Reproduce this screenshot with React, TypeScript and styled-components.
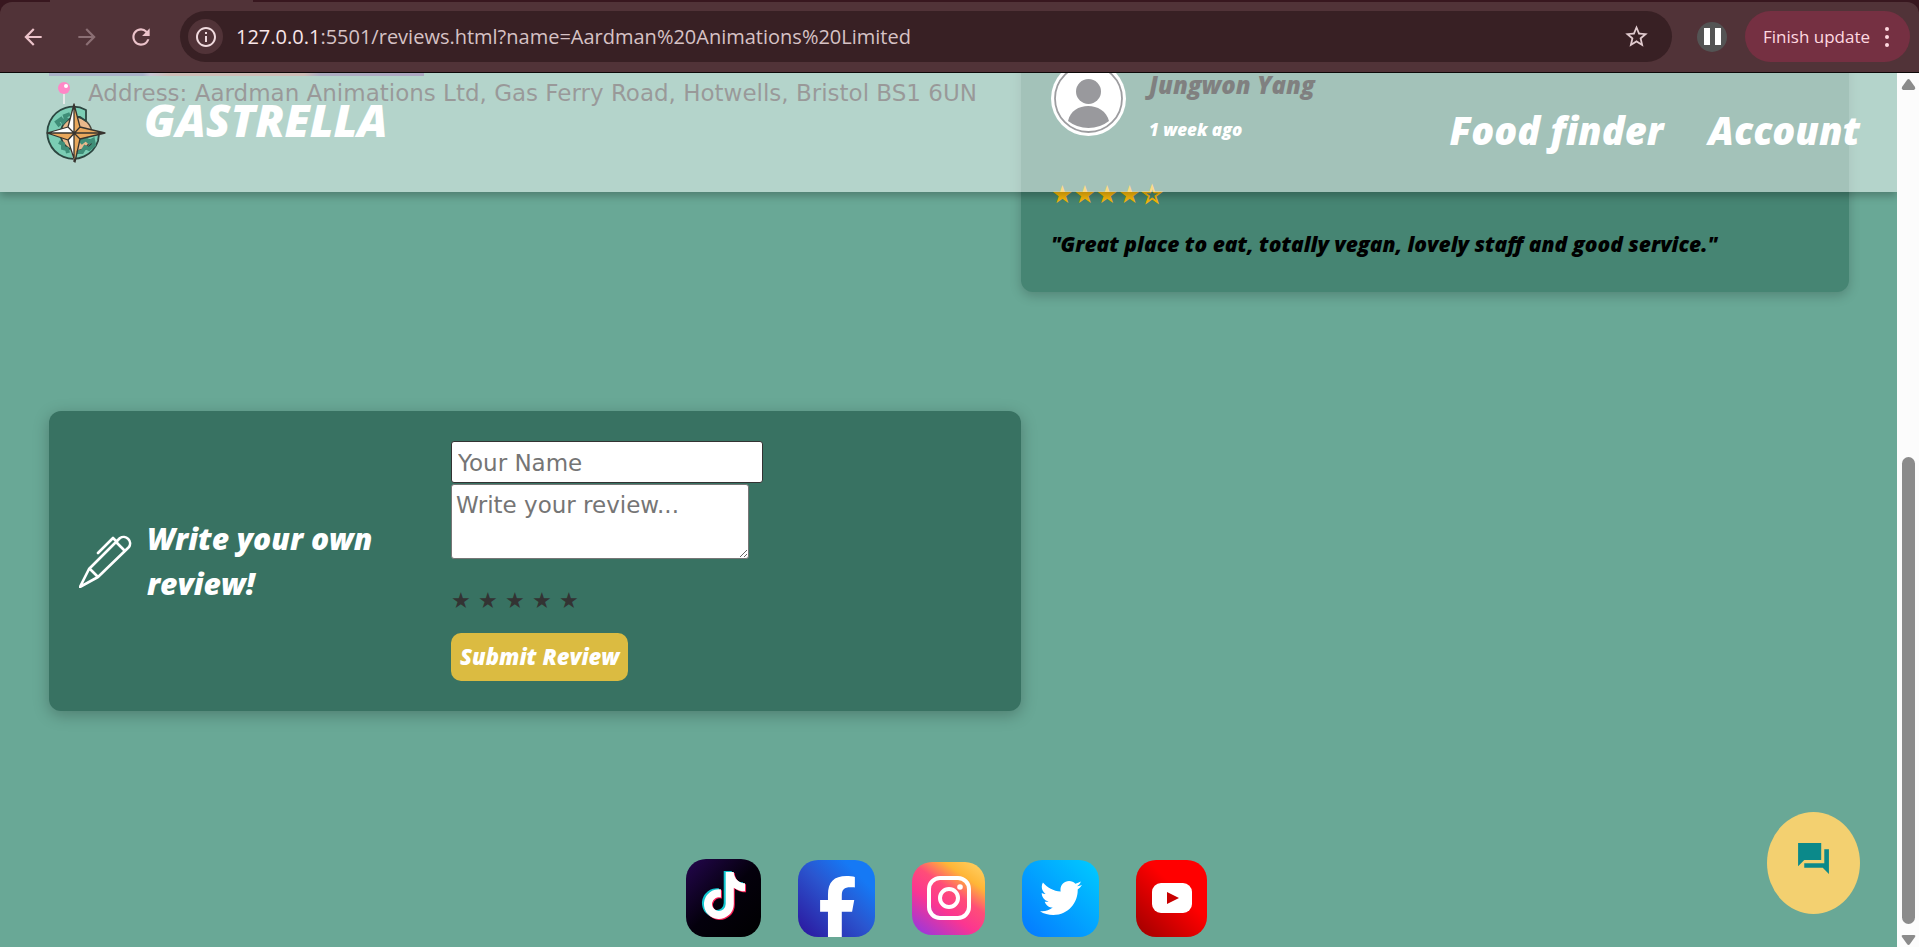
import React from "react";
import styled, { createGlobalStyle } from "styled-components";
import { FaFacebookF, FaTiktok, FaTwitter } from "react-icons/fa6";
import { MdArrowBack, MdArrowForward, MdInfoOutline, MdRefresh, MdStarBorder } from "react-icons/md";

const display = `"Open Sans", "Lato", sans-serif`;
const body = `"DejaVu Sans", Verdana, sans-serif`;
const chrome = `"Open Sans", "Noto Sans", sans-serif`;

const GlobalStyle = createGlobalStyle`
  *, *::before, *::after { box-sizing: border-box; }
  body { margin: 0; background: #69a896; font-family: ${body}; }
  button, input, textarea { font: inherit; }
  p, h1, h2, h3, form, fieldset { margin: 0; }
`;

const Shell = styled.div`
  display: flex;
  flex-direction: column;
  min-height: 100vh;
`;

/* Browser bar */
const TabStrip = styled.div`
  height: 2px;
  padding-left: 50px;
  background: #38171f;
`;
const ActiveTab = styled.div`
  width: 203px;
  height: 2px;
  background: #513338;
`;
const TabBacking = styled.div`
  background: #38171f;
`;
const Toolbar = styled.div`
  display: flex;
  align-items: center;
  height: 71px;
  padding: 0 9px 1px 20px;
  background: #513338;
  border-radius: 12px 12px 0 0;
  border-bottom: 1px solid #0c0808;
  font-family: ${chrome};
`;
const NavButtons = styled.div`
  display: flex;
  gap: 28px;
  width: 160px;
`;
const IconButton = styled.button<{ $color?: string }>`
  display: flex;
  padding: 0;
  border: 0;
  background: none;
  color: ${(p) => p.$color ?? "#ecc3ca"};
`;
const AddressBar = styled.div`
  display: flex;
  flex: 1;
  align-items: center;
  gap: 13px;
  height: 51px;
  padding: 0 22px 0 8px;
  border-radius: 26px;
  background: #382024;
`;
const InfoBadge = styled.span`
  display: flex;
  align-items: center;
  justify-content: center;
  width: 35px;
  height: 35px;
  border-radius: 50%;
  background: #513338;
  color: #f0dade;
`;
const Url = styled.span`
  flex: 1;
  color: #d6c2c5;
  font-size: 20px;
  white-space: nowrap;
`;
const UrlHost = styled.span`
  color: #f8e6e9;
`;
const PauseButton = styled.button`
  display: flex;
  align-items: center;
  justify-content: center;
  gap: 5px;
  width: 30px;
  height: 30px;
  margin: 0 18px 0 25px;
  padding: 0;
  border: 0;
  border-radius: 50%;
  background: #545454;
`;
const PauseBar = styled.span`
  width: 6px;
  height: 17px;
  background: #fff;
`;
const UpdateButton = styled.button`
  display: flex;
  align-items: center;
  justify-content: space-between;
  width: 165px;
  height: 51px;
  padding: 0 21px 0 18px;
  border: 0;
  border-radius: 26px;
  background: #753042;
  color: #ffd9e0;
  font-size: 17px;
  white-space: nowrap;
`;
const Dots = styled.span`
  display: flex;
  flex-direction: column;
  gap: 4px;
`;
const Dot = styled.span`
  width: 4px;
  height: 4px;
  border-radius: 50%;
  background: #ffd9e0;
`;

/* Page */
const Window = styled.div`
  display: flex;
  flex: 1;
  overflow: hidden;
`;
const Page = styled.div`
  position: relative;
  display: flex;
  flex: 1;
  flex-direction: column;
  min-width: 0;
  overflow: hidden;
`;
const Header = styled.header`
  position: absolute;
  inset: 0 0 auto;
  display: flex;
  align-items: center;
  height: 119px;
  padding: 0 37px 0 46px;
  background: rgba(255, 255, 255, 0.5);
  box-shadow: 0 4px 8px rgba(0, 0, 0, 0.25);
  color: #fff;
  font-family: ${display};
  font-style: italic;
  font-weight: 800;
`;
const Brand = styled.h1`
  flex: 1;
  padding: 0 0 25px 38px;
  font-size: 45px;
  font-weight: 800;
  line-height: 50px;
`;
const Nav = styled.nav`
  display: flex;
  gap: 45px;
  padding-bottom: 6px;
`;
const NavLink = styled.a`
  color: #fff;
  font-size: 38px;
  line-height: 48px;
  text-decoration: none;
`;
const Columns = styled.div`
  display: grid;
  grid-template-columns: 972fr 828fr;
  margin: -42px 48px 0 49px;
`;
const Photo = styled.div`
  width: 375px;
  height: 45px;
  background: linear-gradient(90deg, #52628e 0 25%, #8d8aa6 27%, #99796c 32% 68%, #5b5b83 72%, #5b4e83 100%);
`;
const Address = styled.p`
  display: flex;
  align-items: center;
  gap: 16px;
  padding-left: 6px;
  color: #333;
  font-size: 23px;
  line-height: 34px;
  white-space: nowrap;
`;
const ReviewCard = styled.article`
  padding: 30px;
  border-radius: 12px;
  background: #468573;
  box-shadow: 0 4px 12px rgba(0, 0, 0, 0.2);
  font-family: ${display};
  font-style: italic;
  font-weight: 800;
`;
const Reviewer = styled.div`
  display: flex;
  gap: 23px;
  height: 110px;
`;
const ReviewerName = styled.h3`
  padding-top: 8px;
  color: #000;
  font-size: 24px;
  font-weight: 800;
  line-height: 32px;
`;
const ReviewDate = styled.p`
  padding-top: 18px;
  color: #fff;
  font-size: 17px;
  line-height: 22px;
`;
const Stars = styled.p`
  color: #f5b50a;
  font-family: ${body};
  font-size: 25px;
  font-style: normal;
  font-weight: 400;
  line-height: 48px;
`;
const EmptyStar = styled.span`
  -webkit-text-stroke: 1px #f5b50a;
`;
const Quote = styled.p`
  padding-top: 8px;
  font-size: 21px;
  line-height: 35px;
`;
const WriteCard = styled.section`
  display: flex;
  align-items: center;
  width: 54%;
  min-width: 720px;
  max-width: 972px;
  margin: 119px 0 0 49px;
  padding: 30px;
  border-radius: 12px;
  background: #387262;
  box-shadow: 0 4px 16px rgba(0, 0, 0, 0.25);
`;
const Prompt = styled.div`
  display: flex;
  flex: none;
  align-items: center;
  gap: 15px;
  width: 372px;
`;
const PromptTitle = styled.h2`
  width: 260px;
  color: #fff;
  font-family: ${display};
  font-size: 30px;
  font-style: italic;
  font-weight: 800;
  line-height: 45px;
`;
const Form = styled.form`
  display: flex;
  flex-direction: column;
  align-items: flex-start;
`;
const NameInput = styled.input`
  width: 312px;
  height: 42px;
  margin-bottom: 1px;
  padding: 3px 6px 1px;
  border: 1px solid #333;
  border-radius: 3px;
  background: #fff;
  font-size: 23px;
  &::placeholder { color: #757575; }
`;
const ReviewInput = styled.textarea`
  width: 298px;
  height: 75px;
  padding: 6px 4px;
  border: 1px solid #767676;
  border-radius: 3px;
  background: #fff;
  font-size: 23px;
  line-height: 28px;
  &::placeholder { color: #757575; }
`;
const Rating = styled.fieldset`
  display: flex;
  gap: 8px;
  padding: 26px 0 16px;
  border: 0;
`;
const RatingStar = styled.label`
  width: 19px;
  color: #333;
  font-size: 22px;
  line-height: 32px;
`;
const HiddenRadio = styled.input`
  position: absolute;
  opacity: 0;
  pointer-events: none;
`;
const Submit = styled.button`
  height: 48px;
  padding: 0 9px 2px;
  border: 0;
  border-radius: 10px;
  background: #dbbb41;
  color: #fff;
  font-family: ${display};
  font-size: 22px;
  font-style: italic;
  font-weight: 800;
  white-space: nowrap;
`;
const Socials = styled.footer`
  display: flex;
  align-items: center;
  justify-content: center;
  gap: 37px;
  margin-top: auto;
  padding: 40px 4px 10px 0;
`;
const SocialLink = styled.a<{ $bg: string; $w: number; $h: number; $end?: boolean }>`
  display: flex;
  align-items: ${(p) => (p.$end ? "flex-end" : "center")};
  justify-content: center;
  width: ${(p) => p.$w}px;
  height: ${(p) => p.$h}px;
  padding-left: ${(p) => (p.$end ? 2 : 0)}px;
  border-radius: 20px;
  background: ${(p) => p.$bg};
  color: #fff;
`;
const ChatButton = styled.button`
  position: absolute;
  right: 37px;
  bottom: 33px;
  display: flex;
  align-items: center;
  justify-content: center;
  width: 93px;
  height: 102px;
  padding: 0 0 9px;
  border: 0;
  border-radius: 50%;
  background: #f3d070;
  color: #0b898a;
`;
const ScrollTrack = styled.div`
  display: flex;
  flex-direction: column;
  align-items: center;
  width: 22px;
  padding: 5px 0 1px;
  background: #fcfcfc;
`;
const ScrollGap = styled.div`
  flex: 367;
`;
const ScrollThumb = styled.div`
  flex: 466;
  width: 13px;
  margin-bottom: 10px;
  border-radius: 7px;
  background: #8b8b8b;
`;

const ScrollArrow = ({ down = false }: { down?: boolean }) => (
  <svg width="15" height="12" viewBox="0 0 15 12" aria-hidden="true">
    <path
      d={down ? "M2 1H13Q15 1 14 3L9 10Q7.500 12 6 10L1 3Q0 1 2 1Z" : "M2 12H13Q15 11 14 9L9 2Q7.500 0 6 2L1 9Q0 11 2 12Z"}
      fill="#8b8b8b"
    />
  </svg>
);

const Compass = () => (
  <svg width="60" height="62" viewBox="0 0 60 62" aria-label="Gastrella logo">
    <circle cx="29" cy="32" r="17" fill="#e9b98c" stroke="#4b4b40" strokeWidth="1.500" />
    <path d="M40 8A26 26 0 1 0 52 39L53 32H33V36L47 39A17 17 0 1 1 34 15L40 19Z" fill="#7bcdb4" stroke="#2c4640" strokeWidth="1.800" strokeLinejoin="round" />
    <path d="M14 24L11 20L15 17L17 20L20 17L19 14L24 12M32 36L36 40L40 37L43 40L47 38L48 43L43 47L39 45L36 50L31 50M13 40L17 42L17 46L21 47L22 51" fill="none" stroke="#3f8e78" strokeWidth="4" />
    <path d="M28 2V31L22 25ZM1 31L22 25L28 31ZM28 60V31L22 38Z" fill="#fff" />
    <path d="M28 2V31L34 25ZM59 31L34 25L28 31ZM59 31L34 37L28 31ZM28 60V31L34 37ZM1 31L22 38L28 31Z" fill="#e9a85d" />
    <path d="M28 2L34 25L59 31L34 37L29 60L22 38L1 31L22 25ZM28 2V60M1 31H59M22 25L34 37M34 25L22 38" fill="none" stroke="#37342f" strokeWidth="1.300" strokeLinejoin="round" />
  </svg>
);

const Pin = () => (
  <svg width="17" height="24" viewBox="0 0 17 24" aria-hidden="true">
    <path d="M9 12V23" stroke="#ced4d2" strokeWidth="2" />
    <circle cx="9" cy="7" r="6" fill="#ff0f8e" />
    <circle cx="11" cy="5" r="2" fill="#fff" />
  </svg>
);

const Avatar = () => (
  <svg width="75" height="75" viewBox="0 0 75 75" aria-label="Reviewer avatar">
    <circle cx="37.500" cy="37.500" r="37.500" fill="#fff" />
    <circle cx="37.500" cy="37.500" r="33.500" fill="none" stroke="#3a3a40" strokeWidth="1.800" />
    <circle cx="37.500" cy="30.500" r="12.500" fill="#33333a" />
    <path d="M17 60C21 40 53 40 58 60Q49 67 37.500 67Q26 67 17 60Z" fill="#33333a" />
  </svg>
);

const Pen = () => (
  <svg width="53" height="54" viewBox="0 0 53 54" fill="none" stroke="#fff" strokeWidth="2.600" strokeLinecap="round" strokeLinejoin="round" aria-hidden="true">
    <path d="M1 53L10 35L41 4A6.500 6.500 0 0 1 50 13L19 43ZM11 35L19 43M37 8L46 17M38 8L34 4L19 19" />
  </svg>
);

const TikTokMark = () => (
  <svg width="50" height="54" viewBox="0 0 50 54" aria-hidden="true">
    <FaTiktok x="0" y="0" size={47} color="#10c5cf" />
    <FaTiktok x="3" y="2" size={47} color="#fb1d54" />
    <FaTiktok x="2" y="1" size={47} color="#fff" />
  </svg>
);

const InstagramMark = () => (
  <svg width="44" height="44" viewBox="0 0 44 44" fill="none" stroke="#fff" strokeWidth="4" aria-hidden="true">
    <rect x="2" y="2" width="40" height="40" rx="11" />
    <circle cx="22" cy="22" r="9" />
    <circle cx="33" cy="11" r="2.800" fill="#fff" stroke="none" />
  </svg>
);

const YouTubeMark = () => (
  <svg width="40" height="30" viewBox="0 0 40 30" aria-hidden="true">
    <rect width="40" height="30" rx="9" fill="#fff" />
    <path d="M15 9L27 15L15 21Z" fill="#c80000" />
  </svg>
);

const ForumMark = () => (
  <svg width="37" height="37" viewBox="0 0 24 24" fill="currentColor" aria-hidden="true">
    <path d="M22 6h-3v9H6v3h12l4 4V6zM17 13V2H2v15l4-4h11z" />
  </svg>
);

export default function App() {
  return (
    <Shell>
      <GlobalStyle />
      <TabStrip>
        <ActiveTab />
      </TabStrip>
      <TabBacking>
        <Toolbar>
          <NavButtons>
            <IconButton aria-label="Back"><MdArrowBack size={26} /></IconButton>
            <IconButton aria-label="Forward" $color="#8b6f74"><MdArrowForward size={26} /></IconButton>
            <IconButton aria-label="Reload"><MdRefresh size={26} /></IconButton>
          </NavButtons>
          <AddressBar>
            <InfoBadge><MdInfoOutline size={24} /></InfoBadge>
            <Url><UrlHost>127.0.0.1</UrlHost>:5501/reviews.html?name=Aardman%20Animations%20Limited</Url>
            <IconButton aria-label="Bookmark" $color="#e0cace"><MdStarBorder size={27} /></IconButton>
          </AddressBar>
          <PauseButton aria-label="Pause"><PauseBar /><PauseBar /></PauseButton>
          <UpdateButton>
            Finish update
            <Dots><Dot /><Dot /><Dot /></Dots>
          </UpdateButton>
        </Toolbar>
      </TabBacking>
      <Window>
        <Page>
          <Columns>
            <div>
              <Photo />
              <Address><Pin /><span>Address: Aardman Animations Ltd, Gas Ferry Road, Hotwells, Bristol BS1 6UN</span></Address>
            </div>
            <ReviewCard>
              <Reviewer>
                <Avatar />
                <div>
                  <ReviewerName>Jungwon Yang</ReviewerName>
                  <ReviewDate>1 week ago</ReviewDate>
                </div>
              </Reviewer>
              <Stars>★★★★<EmptyStar>☆</EmptyStar></Stars>
              <Quote>"Great place to eat, totally vegan, lovely staff and good service."</Quote>
            </ReviewCard>
          </Columns>
          <WriteCard>
            <Prompt>
              <Pen />
              <PromptTitle>Write your own review!</PromptTitle>
            </Prompt>
            <Form onSubmit={(e) => e.preventDefault()}>
              <NameInput type="text" placeholder="Your Name" aria-label="Your Name" />
              <ReviewInput placeholder="Write your review..." aria-label="Write your review" />
              <Rating aria-label="Rating">
                {[1, 2, 3, 4, 5].map((n) => (
                  <RatingStar key={n}>
                    <HiddenRadio type="radio" name="rating" value={n} aria-label={`${n} stars`} />★
                  </RatingStar>
                ))}
              </Rating>
              <Submit type="submit">Submit Review</Submit>
            </Form>
          </WriteCard>
          <Socials>
            <SocialLink href="#tiktok" aria-label="TikTok" $w={75} $h={78} $bg="linear-gradient(135deg, #24064f, #04000c 50%, #000)"><TikTokMark /></SocialLink>
            <SocialLink href="#facebook" aria-label="Facebook" $w={77} $h={77} $end $bg="linear-gradient(45deg, #2c139b, #2a55cf 50%, #1579f5 80%)"><FaFacebookF size={61} /></SocialLink>
            <SocialLink href="#instagram" aria-label="Instagram" $w={73} $h={73} $bg="linear-gradient(35deg, #9a37dc 5%, #fb3591 38%, #ff4d78 58%, #ffb637 77%, #ffd56c)"><InstagramMark /></SocialLink>
            <SocialLink href="#twitter" aria-label="Twitter" $w={77} $h={77} $bg="linear-gradient(45deg, #0578ff, #00ccff)"><FaTwitter size={42} /></SocialLink>
            <SocialLink href="#youtube" aria-label="YouTube" $w={71} $h={77} $bg="linear-gradient(45deg, #9c0000, #ff0000 60%)"><YouTubeMark /></SocialLink>
          </Socials>
          <Header>
            <Compass />
            <Brand>GASTRELLA</Brand>
            <Nav>
              <NavLink href="#food-finder">Food finder</NavLink>
              <NavLink href="#account">Account</NavLink>
            </Nav>
          </Header>
          <ChatButton aria-label="Open chat"><ForumMark /></ChatButton>
        </Page>
        <ScrollTrack>
          <ScrollArrow />
          <ScrollGap />
          <ScrollThumb />
          <ScrollArrow down />
        </ScrollTrack>
      </Window>
    </Shell>
  );
}
